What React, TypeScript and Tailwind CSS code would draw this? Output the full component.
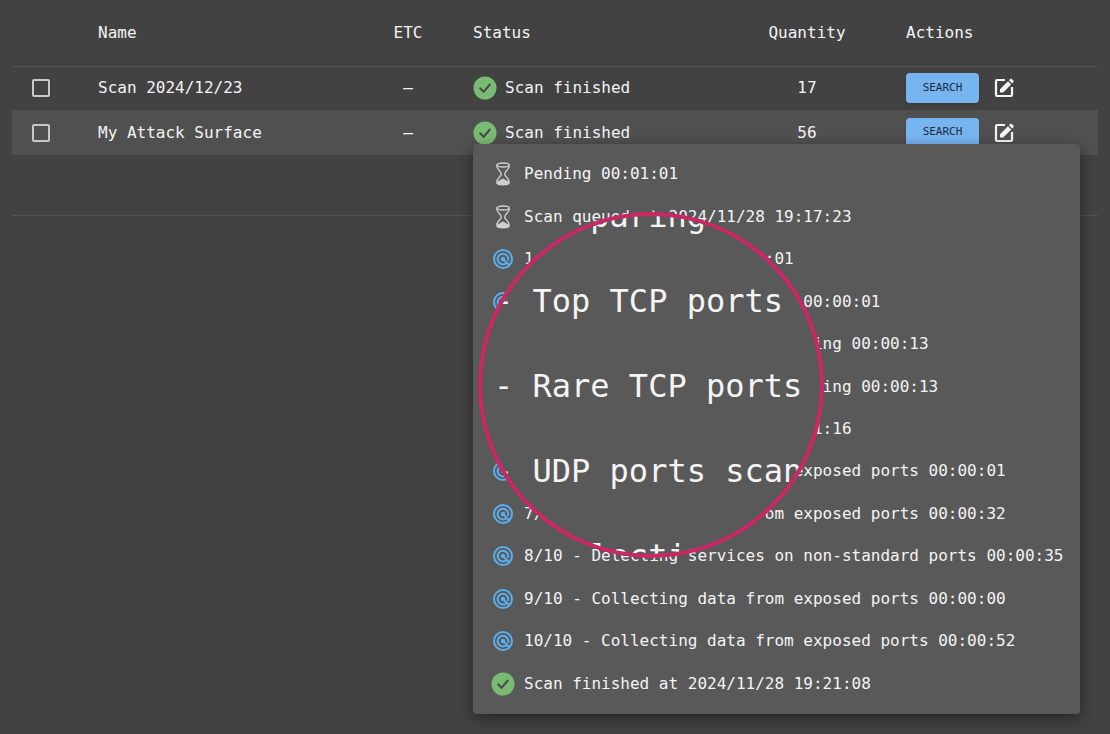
import React from 'react';

type StepKind = 'waiting' | 'running' | 'done';

interface Scan {
  id: string;
  name: string;
  quantity: number;
}

interface Step {
  kind: StepKind;
  text: string;
}

const scans: Scan[] = [
  { id: 'scan-1', name: 'Scan 2024/12/23', quantity: 17 },
  { id: 'scan-2', name: 'My Attack Surface', quantity: 56 },
];

const steps: Step[] = [
  { kind: 'waiting', text: 'Pending 00:01:01' },
  { kind: 'waiting', text: 'Scan queued at 2024/11/28 19:17:23' },
  { kind: 'running', text: '1/10 - Initializing 00:00:01' },
  { kind: 'running', text: '2/10 - Preparing environment 00:00:01' },
  { kind: 'running', text: '3/10 - Top TCP ports SYN scanning 00:00:13' },
  { kind: 'running', text: '4/10 - Rare TCP ports SYN scanning 00:00:13' },
  { kind: 'running', text: '5/10 - UDP ports scanning 00:01:16' },
  { kind: 'running', text: '6/10 - Collecting data from exposed ports 00:00:01' },
  { kind: 'running', text: '7/10 - Collecting data from exposed ports 00:00:32' },
  { kind: 'running', text: '8/10 - Detecting services on non-standard ports 00:00:35' },
  { kind: 'running', text: '9/10 - Collecting data from exposed ports 00:00:00' },
  { kind: 'running', text: '10/10 - Collecting data from exposed ports 00:00:52' },
  { kind: 'done', text: 'Scan finished at 2024/11/28 19:21:08' },
];

const lensLines = ['- Preparing', '- Top TCP ports', '- Rare TCP ports', '- UDP ports scan', '- Collecting'];

const CheckIcon: React.FC = () => (
  <svg viewBox="0 0 24 24" className="h-6 w-6 shrink-0" aria-hidden="true">
    <circle cx="12" cy="12" r="11.5" fill="#7abb74" />
    <path d="M7.2 12.3l3.4 3.600 6.200-7.400" fill="none" stroke="#484848" strokeWidth="2" strokeLinecap="round" strokeLinejoin="round" />
  </svg>
);

const HourglassIcon: React.FC = () => (
  <svg viewBox="0 0 24 24" className="h-6 w-6 shrink-0" fill="none" stroke="#cfcfcf" strokeWidth="1.4" aria-hidden="true">
    <ellipse cx="12" cy="3" rx="6.300" ry="2" />
    <path d="M5.700 3.200c0 4.600 4.600 6 4.600 8.800s-4.600 4.200-4.600 8.400M18.300 3.200c0 4.600-4.600 6-4.600 8.800s4.600 4.200 4.600 8.400" />
    <path d="M5.700 20.600c.3-1 2-1.700 3.200-2.300 1.300-.6 2-1.800 3.100-1.800s1.800 1.200 3.100 1.800c1.200.600 2.900 1.300 3.200 2.300 0 1.700-2.800 2.400-6.300 2.400s-6.300-.7-6.300-2.400z" fill="#cfcfcf" stroke="none" />
    <path d="M5.700 20.600c0 1.500 2.800 2.200 6.300 2.200s6.300-.7 6.300-2.200" />
  </svg>
);

const RadarIcon: React.FC = () => (
  <svg viewBox="0 0 24 24" className="h-6 w-6 shrink-0" fill="none" stroke="#5ab0ee" strokeWidth="2" aria-hidden="true">
    <circle cx="12" cy="12" r="9" />
    <path d="M15.600 16A5.300 5.300 0 1 1 17 13.800" />
    <path d="M12.500 12.500L18.400 18.400" />
    <circle cx="12" cy="12" r="2.200" fill="#5ab0ee" stroke="none" />
  </svg>
);

const EditIcon: React.FC = () => (
  <svg viewBox="0 0 24 24" className="h-6 w-6" aria-hidden="true">
    <path d="M13 4H5a1 1 0 0 0-1 1v14a1 1 0 0 0 1 1h14a1 1 0 0 0 1-1v-8" fill="none" stroke="currentColor" strokeWidth="2.200" />
    <path d="M16 5.200L8 13.200V16.400h3.200L19.200 8.400zM17 4.200l1.300-1.300a1 1 0 0 1 1.400 0l1.800 1.800a1 1 0 0 1 0 1.400L20.200 7.400z" fill="currentColor" />
  </svg>
);

const StepIcon: React.FC<{ kind: StepKind }> = ({ kind }) => {
  if (kind === 'waiting') return <HourglassIcon />;
  if (kind === 'done') return <CheckIcon />;
  return <RadarIcon />;
};

const ScanRow: React.FC<{ scan: Scan; active: boolean }> = ({ scan, active }) => (
  <tr className={active ? 'h-[45px] bg-[#505050]' : 'h-11'}>
    <td className="pl-5">
      <input
        type="checkbox"
        aria-label={`Select ${scan.name}`}
        className="block h-[18px] w-[18px] appearance-none rounded-xs border-2 border-[#c8c8c8]"
      />
    </td>
    <td>{scan.name}</td>
    <td className="text-center">–</td>
    <td>
      <div className="flex items-center gap-2">
        <CheckIcon />
        <span>Scan finished</span>
      </div>
    </td>
    <td className="text-center">{scan.quantity}</td>
    <td>
      <div className="flex items-center gap-[13px]">
        <button type="button" className="h-[30px] w-[73px] rounded bg-[#77b5f1] text-[11px] text-[#1c2a38] shadow-md">
          SEARCH
        </button>
        <button type="button" aria-label={`Edit ${scan.name}`}>
          <EditIcon />
        </button>
      </div>
    </td>
  </tr>
);

// magnifier over the middle of the step list
const Lens: React.FC = () => (
  <div className="absolute top-[68px] left-[5px] h-[346px] w-[346px] overflow-hidden rounded-full border-4 border-[#cb2665] bg-[#595959]">
    <div className="-mt-[42px] ml-3 text-[32px] leading-[85px] whitespace-pre">
      {lensLines.map((line) => (
        <p key={line}>{line}</p>
      ))}
    </div>
  </div>
);

const StatusPopover: React.FC = () => (
  <div className="absolute top-[144px] right-[30px] w-[607px] rounded bg-[#595959] px-[18px] py-[9px] shadow-[0_4px_14px_rgba(0,0,0,0.45)]">
    <ul className="grid h-[552px] auto-rows-fr">
      {steps.map((step) => (
        <li key={step.text} className="flex items-center gap-[9px] whitespace-pre">
          <StepIcon kind={step.kind} />
          <span>{step.text}</span>
        </li>
      ))}
    </ul>
    <Lens />
  </div>
);

export default function App() {
  return (
    <main className="relative min-h-screen bg-[#424242] px-3 font-['DejaVu_Sans_Mono',monospace] text-base text-[#f4f4f4]">
      <table className="w-full table-fixed border-collapse text-left">
        <colgroup>
          <col className="w-[86px]" />
          <col />
          <col className="w-[130px]" />
          <col className="w-[235px]" />
          <col className="w-[198px]" />
          <col className="w-[192px]" />
        </colgroup>
        <thead>
          <tr className="h-[66px] border-b border-[#535353]">
            <th aria-label="Selected" />
            <th className="font-normal">Name</th>
            <th className="text-center font-normal">ETC</th>
            <th className="font-normal">Status</th>
            <th className="text-center font-normal">Quantity</th>
            <th className="font-normal">Actions</th>
          </tr>
        </thead>
        <tbody>
          {scans.map((scan, i) => (
            <ScanRow key={scan.id} scan={scan} active={i === 1} />
          ))}
        </tbody>
        <tfoot>
          <tr className="h-[60px] border-b border-[#535353]">
            <td colSpan={6} />
          </tr>
        </tfoot>
      </table>
      <StatusPopover />
    </main>
  );
}
